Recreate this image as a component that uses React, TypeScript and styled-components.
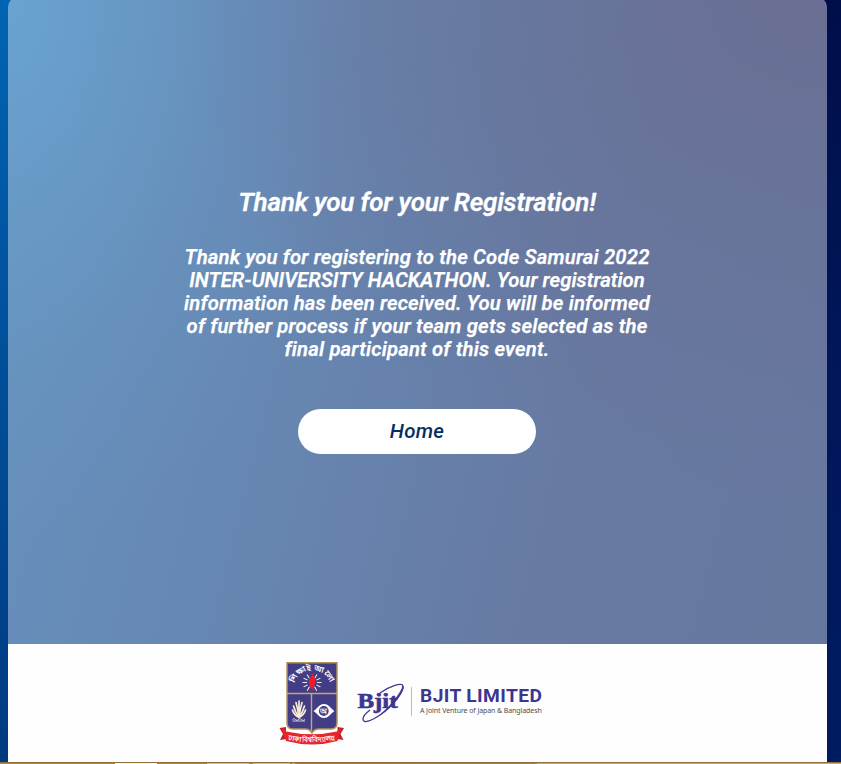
import React from "react";
import styled, { createGlobalStyle } from "styled-components";

const GlobalStyle = createGlobalStyle`
  *, *::before, *::after { box-sizing: border-box; }
  html, body { margin: 0; overflow: hidden; }
`;

const Page = styled.div`
  width: 841px;
  height: 764px;
  display: flex;
  flex-direction: column;
  overflow: hidden;
  font-family: Roboto, "Liberation Sans", sans-serif;
  background:
    linear-gradient(180deg, #0064b4 0%, #00509c 45%, #003a80 100%) 0 0 / 50% 100% no-repeat,
    linear-gradient(180deg, #000f4a 0%, #00175a 50%, #001c60 100%) 100% 0 / 50% 100% no-repeat;
`;

const Card = styled.main`
  width: 819px;
  height: 765px;
  margin: -3px 0 0 8px;
  display: flex;
  flex: none;
  flex-direction: column;
`;

const Hero = styled.section`
  height: 647px;
  padding: 190px 1px 0 0;
  display: flex;
  flex-direction: column;
  align-items: center;
  border-radius: 10px 10px 0 0;
  color: #fff;
  font-style: italic;
  text-align: center;
  background:
    radial-gradient(ellipse 340px 560px at 0 0, rgba(106, 166, 211, 0.85) 0%, rgba(106, 165, 210, 0.5) 30%, rgba(104, 159, 203, 0.2) 65%, rgba(104, 155, 200, 0) 100%),
    radial-gradient(ellipse 660px 500px at 100% 0, #6a6f93 0%, rgba(105, 112, 149, 0.6) 45%, rgba(104, 114, 152, 0) 100%),
    linear-gradient(104deg, #6793c0 0%, #6688b3 34%, #677aa3 68%, #67789f 100%);
`;

const Title = styled.h1`
  margin: 0;
  font-size: 26px;
  line-height: 30px;
  font-weight: 600;
  letter-spacing: -0.17px;
  white-space: nowrap;
  -webkit-text-stroke: 0.3px #fff;
`;

const Message = styled.p`
  margin: 29px 0 0;
  font-size: 20.3px;
  line-height: 23px;
  font-weight: 600;
  white-space: nowrap;
  -webkit-text-stroke: 0.25px #fff;
`;

const Line = styled.span<{ $spacing: number }>`
  display: block;
  letter-spacing: ${(p) => p.$spacing}px;
`;

const HomeButton = styled.button`
  width: 238px;
  height: 45px;
  margin-top: 48px;
  padding: 0;
  border: 0;
  border-radius: 23px;
  background: #fff;
  color: #03305f;
  font: italic 500 20.5px/45px Roboto, sans-serif;
  letter-spacing: 0.25px;
`;

const Sponsors = styled.footer`
  height: 118px;
  padding: 17px 0 0 270px;
  display: flex;
  align-items: flex-start;
  background: #fefefe;
`;

const Emblem = styled.svg`
  width: 68px;
  height: 86px;
  flex: none;
`;

const Orbit = styled.svg`
  width: 50px;
  height: 44px;
  margin: 21px 0 0 10px;
  flex: none;
`;

const Divider = styled.div`
  width: 1px;
  height: 29px;
  margin: 26px 8px 0 5px;
  background: #bbb;
`;

const Company = styled.div`
  margin-top: 24px;
  white-space: nowrap;
`;

const CompanyName = styled.div`
  color: #3c368e;
  font: 700 19.2px/22px Roboto, sans-serif;
  letter-spacing: 0.38px;
`;

const CompanyNote = styled.div`
  color: #4c4c50;
  font: 400 7px/8px "Noto Sans", sans-serif;
  letter-spacing: -0.09px;
`;

const TaskStrip = styled.div`
  height: 2px;
  flex: none;
  display: flex;
  border-top: 1px solid #94703c;
  background: linear-gradient(90deg, #b58231 0 295px, #b2702f 300px 390px, #a17d38 430px 535px, #c1a77a 538px);
`;

const TaskTile = styled.div<{ $gap: number; $width: number; $color: string }>`
  width: ${(p) => p.$width}px;
  margin-left: ${(p) => p.$gap}px;
  background: ${(p) => p.$color};
`;

const rays = [-150, -118, -90, -62, -32, 32, 62, 90, 118, 150];

function UniversityEmblem() {
  return (
    <Emblem viewBox="278 661 68 86">
      <path d="M287 662.700H337V723Q337 729 331 729H319Q314 729 312 733Q310 729 305 729H293Q287 729 287 723Z" fill="#433d86" stroke="#b39459" strokeWidth="1.500" />
      <path d="M287 693.500H337M311.500 693.500V731" stroke="#c6a86e" strokeWidth="1.400" />
      <path id="motto" d="M294.500 686C295 665.500 329 665.500 329.500 686" fill="none" />
      <text fill="#fff" fontSize="8.200" fontWeight="600" fontFamily="Noto Sans Bengali, Noto Sans, sans-serif" textAnchor="middle">
        <textPath href="#motto" startOffset="50%" textLength="46" lengthAdjust="spacingAndGlyphs">শিক্ষাই আলো</textPath>
      </text>
      <g stroke="#fff" strokeWidth="0.900">
        {rays.map((a) => (
          <path key={a} d="M312 677.500V673" transform={`rotate(${a} 312 682.500)`} />
        ))}
      </g>
      <path d="M312.500 672.500C313 676 316 678 315.500 682C315.500 685 313 686 312.500 691L310 686C307.500 682 309.500 679 311 677Z" fill="#ef1c25" />
      <g fill="none" stroke="#f5eed4" strokeWidth="1.700" strokeLinecap="round">
        <path d="M299 701V716M296 702.500Q297.500 708 299 716M302 702.500Q300.500 708 299 716" />
        <path d="M293.500 706Q295 712 299 717M304.500 706Q303 712 299 717M292.500 710Q294 715 299 717.500M305.500 710Q304 715 299 717.500" />
      </g>
      <path d="M292.500 719.500Q294 717.500 295.500 719.500T298.500 719.500T301.500 719.500T305 719.500M292.500 721H305" fill="none" stroke="#ddd" strokeWidth=".9" />
      <path d="M313.500 711C317 709 319 704 324 704S331 709 334.500 711C331 713 329 718 324 718S317 713 313.500 711Z" fill="#fff" />
      <circle cx="323.800" cy="711" r="4.900" fill="#433d86" />
      <text x="323.800" y="713.700" fill="#fff" fontSize="7.500" fontWeight="700" textAnchor="middle">অ</text>
      <path d="M279.500 728L286 727V739L280 740L283 734ZM344 728L337.500 727V739L343.500 740L340.500 734Z" fill="#c51f27" />
      <path d="M283 728L286 731.500Q312 737 337 731.500L340 728L341 729L337.500 741Q312 748 286 741L282 729Z" fill="#e6252d" />
      <path id="ribbon" d="M287 740Q312 744.500 336 740" fill="none" />
      <text fill="#fff" fontSize="7" fontWeight="600" textAnchor="middle">
        <textPath href="#ribbon" startOffset="50%">ঢাকা বিশ্ববিদ্যালয়</textPath>
      </text>
    </Emblem>
  );
}

function BjitMark() {
  return (
    <Orbit viewBox="356 682 50 44">
      <text x="357.500" y="707.500" fill="#3c368e" stroke="#3c368e" strokeWidth="0.600" fontFamily="Liberation Serif" fontWeight="700" fontSize="20.500" textLength="40" lengthAdjust="spacingAndGlyphs">Bjit</text>
      <path d="M380 693C390 686 402 682 403 686C404.500 691 393 706 380 715C371 721 363 724 363 719C363 716 366 713 370 710" fill="none" stroke="#3c368e" strokeWidth="1.300" />
      <path d="M403 686C404.500 691 393 706 380 715C392 705 401 692 403 686Z" fill="#3c368e" stroke="#3c368e" strokeWidth=".6" />
    </Orbit>
  );
}

export default function App() {
  return (
    <>
      <GlobalStyle />
      <Page>
        <Card>
          <Hero>
            <Title>Thank you for your Registration!</Title>
            <Message>
              <Line $spacing={0.17}>Thank you for registering to the Code Samurai 2022</Line>
              <Line $spacing={0.05}>INTER-UNIVERSITY HACKATHON. Your registration</Line>
              <Line $spacing={0.15}>information has been received. You will be informed</Line>
              <Line $spacing={0.17}>of further process if your team gets selected as the</Line>
              <Line $spacing={0.18}>final participant of this event.</Line>
            </Message>
            <HomeButton>Home</HomeButton>
          </Hero>
          <Sponsors>
            <UniversityEmblem />
            <BjitMark />
            <Divider />
            <Company>
              <CompanyName>BJIT LIMITED</CompanyName>
              <CompanyNote>A Joint Venture of Japan &amp; Bangladesh</CompanyNote>
            </Company>
          </Sponsors>
        </Card>
        <TaskStrip>
          <TaskTile $gap={115} $width={42} $color="#fff4e0" />
          <TaskTile $gap={50} $width={42} $color="#ddb77c" />
          <TaskTile $gap={4} $width={37} $color="#ddb77c" />
          <TaskTile $gap={2} $width={3} $color="#d5a56b" />
        </TaskStrip>
      </Page>
    </>
  );
}
